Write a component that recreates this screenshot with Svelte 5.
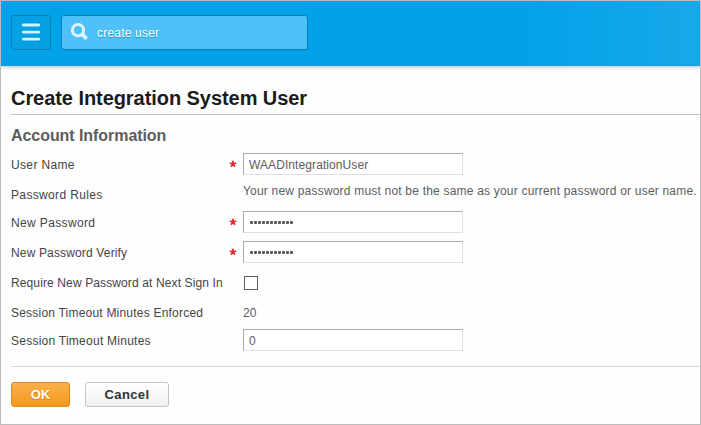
<script>
  const rows = [
    { label: 'User Name', type: 'text', value: 'WAADIntegrationUser', required: true, height: 30, spacing: 0.35, valueSpacing: 0.09 },
    { label: 'Password Rules', type: 'note', value: 'Your new password must not be the same as your current password or user name.', height: 28, spacing: 0.35, valueSpacing: 0.2 },
    { label: 'New Password', type: 'password', value: '12345678901', required: true, height: 30, spacing: 0.36 },
    { label: 'New Password Verify', type: 'password', value: '12345678901', required: true, height: 30, spacing: 0.15 },
    { label: 'Require New Password at Next Sign In', type: 'check', height: 30, spacing: 0.12 },
    { label: 'Session Timeout Minutes Enforced', type: 'plain', value: '20', height: 29, spacing: 0.21 },
    { label: 'Session Timeout Minutes', type: 'number', value: '0', height: 27, spacing: 0.25 }
  ];
</script>

<div class="window">
  <header>
    <button class="menu" aria-label="Menu">
      <svg width="18" height="19" viewBox="0 0 18 19"><path d="M1.3 2h15.4M1.3 9.1h15.4M1.3 16.2h15.4" stroke="#d5f0ff" stroke-width="2.8" stroke-linecap="round" /></svg>
    </button>
    <div class="search">
      <svg width="18" height="18" viewBox="0 0 18 18" fill="none" stroke="#dff4ff"><circle cx="7" cy="7.2" r="5.6" stroke-width="3" /><path d="M11.6 11.6l2.8 2.9" stroke-width="4" stroke-linecap="round" /></svg>
      <span>create user</span>
    </div>
  </header>
  <main>
    <h1><span>Create Integration System User</span></h1>
    <h2><span>Account Information</span></h2>
    <form>
      {#each rows as row}
        <div class="row {row.type}" style:height="{row.height}px">
          <div class="label" style:letter-spacing="{row.spacing}px"><span>{row.label}</span></div>
          <div class="star">
            {#if row.required}
              <svg width="8" height="8" viewBox="0 0 8 8"><path d="M4 4V.7M4 4L.8 3M4 4L7.2 3M4 4L2 6.8M4 4L6 6.8" stroke="#e12a33" stroke-width="1.8" /></svg>
            {/if}
          </div>
          <div class="value" style:letter-spacing="{row.valueSpacing ?? 0.2}px">
            {#if row.type === 'text' || row.type === 'number'}
              <div class="field"><span>{row.value}</span></div>
            {:else if row.type === 'password'}
              <div class="field dots">{#each row.value as _}<i></i>{/each}</div>
            {:else if row.type === 'check'}
              <div class="box"></div>
            {:else}
              <span>{row.value}</span>
            {/if}
          </div>
        </div>
      {/each}
    </form>
    <footer>
      <button class="ok">OK</button>
      <button class="cancel">Cancel</button>
    </footer>
  </main>
</div>

<style>
  .window {
    box-sizing: border-box;
    width: 701px;
    height: 425px;
    border: 1px solid #bdbdbd;
    background: #fefefe;
    overflow: hidden;
    font-family: "Liberation Sans", Arial, sans-serif;
    font-size: 12px;
    color: #444;
  }
  svg { display: block; }
  header {
    box-sizing: border-box;
    height: 65px;
    padding: 14px 10px 0;
    display: flex;
    gap: 10px;
    background: linear-gradient(90deg, #02a2e9 0 75%, #18a8ea);
    border-bottom: 1px solid #2499cd;
    box-shadow: 0 1px 4px rgba(0, 50, 90, .3);
  }
  .menu, .search {
    box-sizing: border-box;
    height: 35px;
    border: 1px solid #087fb9;
    border-radius: 3px;
    display: flex;
    align-items: center;
  }
  .menu {
    width: 40px;
    padding: 0 0 1px;
    justify-content: center;
    background: #06a0e5;
  }
  .search {
    width: 247px;
    padding-left: 9px;
    gap: 8px;
    background: #50c0f8;
    color: #fff;
    letter-spacing: .2px;
    text-shadow: 0 1px 1px #218dc0;
  }
  .search svg { margin-top: -1px; }
  main { padding-left: 10px; }
  h1 {
    box-sizing: border-box;
    height: 49px;
    margin: 0;
    padding-top: 21px;
    border-bottom: 1px solid #bfbfbf;
    font-size: 20px;
    line-height: 23px;
    letter-spacing: -.06px;
    color: #1b1b1b;
  }
  h2 {
    box-sizing: border-box;
    height: 34px;
    margin: 0;
    padding-top: 11px;
    font-size: 16px;
    line-height: 20px;
    letter-spacing: -.06px;
    color: #5d5d5d;
  }
  .row {
    display: flex;
    align-items: center;
    white-space: nowrap;
    line-height: 14px;
  }
  .label { flex: 0 0 218px; padding-top: 1px; }
  .star { flex: 0 0 14px; padding-bottom: 1px; }
  .value { color: #5d5d5d; }
  .note .label { padding-top: 3px; }
  .note .value { padding-bottom: 4px; }
  .plain .label, .plain .value, .number .label { padding-top: 3px; }
  .field {
    box-sizing: border-box;
    width: 220px;
    height: 22px;
    padding: 1px 5px 0;
    display: flex;
    align-items: center;
    border: 1px solid #dfdfdf;
    border-top-color: #acacac;
    border-left-color: #acacac;
    background: #fff;
  }
  .number .field { padding-top: 2px; }
  .dots { gap: 1px; padding-left: 6px; }
  .dots i { width: 3px; height: 3px; border-radius: 1px; background: #555; }
  .box {
    box-sizing: border-box;
    width: 14px;
    height: 14px;
    margin: 1px 0 0 1px;
    border: 1px solid #5f5f5f;
    background: #fff;
  }
  footer {
    margin-top: 13px;
    padding-top: 15px;
    border-top: 1px solid #d7d7d7;
    display: flex;
    gap: 15px;
  }
  footer button {
    box-sizing: border-box;
    height: 25px;
    padding: 0;
    border-radius: 3px;
    font: bold 13px "Liberation Sans", Arial, sans-serif;
  }
  .ok {
    width: 59px;
    border: 1px solid #d98a2b;
    background: linear-gradient(#fbb04a, #f39a1b);
    color: #fff;
    text-shadow: 0 1px 1px #c77b19;
  }
  .cancel {
    width: 84px;
    border: 1px solid #c3c3c3;
    background: linear-gradient(#fff, #f0f0f0);
    color: #333;
    letter-spacing: .4px;
  }
</style>
